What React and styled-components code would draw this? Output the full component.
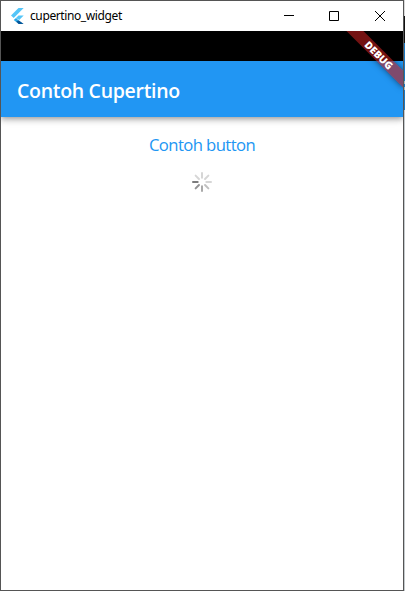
import React from "react";
import styled, { createGlobalStyle } from "styled-components";

const GlobalStyle = createGlobalStyle`
  * { box-sizing: border-box; }
  body { margin: 0; background: #fff; overflow: hidden; }
`;

const Desktop = styled.div`
  display: flex;
  width: 405px;
  height: 591px;
  font-family: "Open Sans", "Noto Sans", sans-serif;
`;

const Backdrop = styled.div`
  width: 1px;
  height: 591px;
  background: linear-gradient(
    #d8d8d8 0 16px,
    #111 16px 43px,
    #1b78c2 43px 81px,
    #a5b4c0 81px 84px,
    #1b78c2 84px 87px,
    #a5b4c0 87px 90px,
    #1b78c2 90px 110px,
    #c4cacd 110px
  );
`;

const Window = styled.div`
  display: flex;
  flex-direction: column;
  width: 404px;
  height: 591px;
  border: 1px solid #555;
  background: #fff;
`;

const TitleBar = styled.header`
  display: flex;
  align-items: center;
  height: 30px;
  flex: none;
  padding-left: 9px;
  background: #fff;
`;

const WindowTitle = styled.span`
  flex: 1;
  margin-left: 5px;
  font-family: "Noto Sans", sans-serif;
  font-size: 12px;
  line-height: 16px;
  letter-spacing: -0.39px;
  color: #000;
`;

const WindowButton = styled.button`
  display: flex;
  align-items: center;
  justify-content: center;
  width: ${(p) => p.$width || 46}px;
  height: 30px;
  padding: 0;
  border: 0;
  background: transparent;
`;

const Client = styled.div`
  position: relative;
  flex: 1;
  display: flex;
  flex-direction: column;
  overflow: hidden;
`;

const StatusBar = styled.div`
  height: 30px;
  flex: none;
  background: #000;
`;

const AppBar = styled.div`
  display: flex;
  align-items: center;
  height: 56px;
  flex: none;
  padding: 0 16px;
  background: #2196f3;
  box-shadow: 0 2px 4px -1px rgba(0, 0, 0, 0.2), 0 4px 5px rgba(0, 0, 0, 0.14),
    0 1px 10px rgba(0, 0, 0, 0.12);
`;

const AppTitle = styled.h1`
  margin: 3px 0 0;
  font-size: 19.5px;
  font-weight: 600;
  line-height: 27px;
  letter-spacing: -0.3px;
  white-space: nowrap;
  color: #fff;
`;

const Content = styled.main`
  display: flex;
  flex-direction: column;
  align-items: center;
  padding-top: 16px;
`;

const TextButton = styled.button`
  height: 24px;
  padding: 0;
  border: 0;
  background: transparent;
  font-family: "Open Sans", sans-serif;
  font-size: 16.7px;
  font-weight: 400;
  line-height: 24px;
  letter-spacing: -0.6px;
  white-space: nowrap;
  color: #2196f3;
`;

const Spinner = styled.svg`
  margin-top: 15px;
`;

const DebugBanner = styled.div`
  position: absolute;
  top: 28px;
  left: 362px;
  width: 80px;
  height: 12px;
  transform-origin: 40px -28px;
  transform: rotate(45deg);
  background: rgba(183, 28, 28, 0.627);
  box-shadow: 0 0 6px rgba(0, 0, 0, 0.5);
  font-size: 10.2px;
  font-weight: 800;
  line-height: 12px;
  text-align: center;
  color: #fff;
`;

const petals = [
  [180, 0.58],
  [135, 0.48],
  [90, 0.38],
  [45, 0.28],
  [0, 0.18],
  [315, 0.18],
  [270, 0.18],
  [225, 0.18],
];

function FlutterLogo() {
  return (
    <svg width="15" height="17" viewBox="0 1 15 17">
      <path d="M8.5 1h5.2L3.7 11 1 8.5z" fill="#54c5f8" />
      <path d="M8.5 8.5h5.2L9.2 13 6 11z" fill="#54c5f8" />
      <path d="M6 11 8.7 13.6 6.5 15.2 3.8 13z" fill="#29a7e6" />
      <path d="M8.7 13.2 13.7 17H8.5l-2.3-2.2z" fill="#01579b" />
    </svg>
  );
}

export default function App() {
  return (
    <>
      <GlobalStyle />
      <Desktop>
        <Window>
          <TitleBar>
            <FlutterLogo />
            <WindowTitle>cupertino_widget</WindowTitle>
            <WindowButton aria-label="Minimize" $width={44}>
              <svg width="10" height="10">
                <path d="M0 4.5h10" stroke="#000" />
              </svg>
            </WindowButton>
            <WindowButton aria-label="Maximize">
              <svg width="10" height="10">
                <path d="M.5.5h9v9h-9z" fill="none" stroke="#000" />
              </svg>
            </WindowButton>
            <WindowButton aria-label="Close">
              <svg width="10" height="10">
                <path d="M0 0l10 10M10 0 0 10" stroke="#000" />
              </svg>
            </WindowButton>
          </TitleBar>
          <Client>
            <StatusBar />
            <AppBar>
              <AppTitle>Contoh Cupertino</AppTitle>
            </AppBar>
            <Content>
              <TextButton>Contoh button</TextButton>
              <Spinner width="20" height="20" viewBox="-10 -10 20 20">
                {petals.map(([angle, opacity]) => (
                  <rect
                    key={angle}
                    x="3.3"
                    y="-1"
                    width="6.7"
                    height="2"
                    rx="1"
                    fill="#1c1c1e"
                    fillOpacity={opacity}
                    transform={`rotate(${angle})`}
                  />
                ))}
              </Spinner>
            </Content>
            <DebugBanner>DEBUG</DebugBanner>
          </Client>
        </Window>
        <Backdrop />
      </Desktop>
    </>
  );
}
